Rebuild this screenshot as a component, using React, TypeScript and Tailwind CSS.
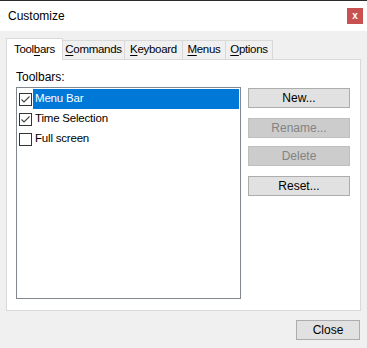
import React from "react";

const tabs = [
  { pre: "Tool", key: "b", post: "ars", w: "w-[57px]", active: true },
  { pre: "", key: "C", post: "ommands", w: "w-[62px]" },
  { pre: "", key: "K", post: "eyboard", w: "w-[58px]" },
  { pre: "", key: "M", post: "enus", w: "w-[43px]" },
  { pre: "", key: "O", post: "ptions", w: "w-[47px]" },
];

const items = [
  { label: "Menu Bar", checked: true, selected: true },
  { label: "Time Selection", checked: true },
  { label: "Full screen", checked: false },
];

const Check = ({ on }: { on: boolean }) => (
  <span className="w-[13px] h-[13px] border border-[#333333] bg-white flex items-center justify-center shrink-0">
    {on && (
      <svg width="11" height="11" viewBox="0 0 11 11">
        <path d="M1.5 5.5 L4 8 L9.5 2.5" fill="none" stroke="#444444" strokeWidth="1.1" />
      </svg>
    )}
  </span>
);

const Btn = ({ label, disabled, cls = "" }: { label: string; disabled?: boolean; cls?: string }) => (
  <div
    className={`h-[20px] flex items-center justify-center border ${
      disabled
        ? "bg-[#cccccc] border-[#bfbfbf] text-[#838383]"
        : "bg-[#e1e1e1] border-[#adadad] text-black"
    } ${cls}`}
  >
    {label}
  </div>
);

export default function App() {
  return (
    <div
      className="w-[367px] h-[348px] bg-[#f0f0f0] flex flex-col text-[12px] text-black"
      style={{ fontFamily: '"Liberation Sans", Arial, sans-serif' }}
    >
      <div className="h-[31px] bg-white border-t border-[#2b2b2b] flex items-center justify-between pl-[8px] pr-[4px]">
        <span className="text-[12px]">Customize</span>
        <div className="w-[16px] h-[16px] bg-[#c75050] text-white text-[10px] font-bold flex items-center justify-center leading-none">
          x
        </div>
      </div>

      <div className="pt-[7px] px-[6px]">
        <div className="flex items-end h-[21px] text-[11.5px] tracking-[-0.3px]">
          {tabs.map((t, i) => (
            <div
              key={i}
              className={`${t.w} flex items-center justify-center border-[#d9d9d9] ${
                t.active
                  ? "h-[22px] bg-white border border-b-0 relative z-10 -mb-px"
                  : "h-[19px] bg-[#f0f0f0] border border-l-0 border-b-0"
              }`}
            >
              <span>
                {t.pre}
                <span className="underline underline-offset-2">{t.key}</span>
                {t.post}
              </span>
            </div>
          ))}
        </div>

        <div className="h-[252px] bg-white border border-[#d9d9d9] pl-[9px] pt-[9px] flex flex-col">
          <div className="h-[16px] leading-[16px]">Toolbars:</div>
          <div className="flex mt-[2px] gap-[7px]">
            <div className="w-[225px] h-[212px] border border-[#828790] bg-white pt-[1px] text-[11.5px] tracking-[-0.2px]">
              {items.map((it) => (
                <div key={it.label} className="h-[20px] flex items-center pl-[2px]">
                  <Check on={it.checked} />
                  <div
                    className={`ml-[1px] flex-1 h-[20px] flex items-center pl-[2px] mr-[1px] ${
                      it.selected ? "bg-[#0078d7] text-white" : ""
                    }`}
                  >
                    {it.label}
                  </div>
                </div>
              ))}
            </div>
            <div className="w-[102px] flex flex-col pt-[1px]">
              <Btn label="New..." />
              <Btn label="Rename..." disabled cls="mt-[10px]" />
              <Btn label="Delete" disabled cls="mt-[8px]" />
              <Btn label="Reset..." cls="mt-[10px]" />
            </div>
          </div>
        </div>
      </div>

      <div className="flex justify-end pr-[7px] pt-[9px]">
        <Btn label="Close" cls="w-[64px]" />
      </div>
    </div>
  );
}
